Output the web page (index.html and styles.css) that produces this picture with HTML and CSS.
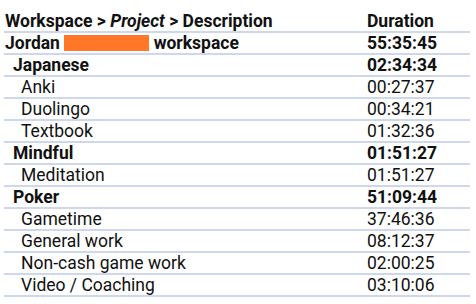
FILE: index.html
```html
<!DOCTYPE html>
<html>
<head>
<meta charset="utf-8">
<link rel="stylesheet" href="styles.css">
</head>
<body>
<div class="report">
  <div class="row head">
    <div class="name">Workspace &gt; <em>Project</em> &gt; Description</div>
    <div class="dur">Duration</div>
  </div>
  <div class="row bold">
    <div class="name">Jordan <span class="redact"></span> workspace</div>
    <div class="dur">55:35:45</div>
  </div>
  <div class="row bold l1">
    <div class="name">Japanese</div>
    <div class="dur">02:34:34</div>
  </div>
  <div class="row l2">
    <div class="name">Anki</div>
    <div class="dur">00:27:37</div>
  </div>
  <div class="row l2">
    <div class="name">Duolingo</div>
    <div class="dur">00:34:21</div>
  </div>
  <div class="row l2">
    <div class="name">Textbook</div>
    <div class="dur">01:32:36</div>
  </div>
  <div class="row bold l1">
    <div class="name">Mindful</div>
    <div class="dur">01:51:27</div>
  </div>
  <div class="row l2">
    <div class="name">Meditation</div>
    <div class="dur">01:51:27</div>
  </div>
  <div class="row bold l1">
    <div class="name">Poker</div>
    <div class="dur">51:09:44</div>
  </div>
  <div class="row l2">
    <div class="name">Gametime</div>
    <div class="dur">37:46:36</div>
  </div>
  <div class="row l2">
    <div class="name">General work</div>
    <div class="dur">08:12:37</div>
  </div>
  <div class="row l2">
    <div class="name">Non-cash game work</div>
    <div class="dur">02:00:25</div>
  </div>
  <div class="row l2">
    <div class="name">Video / Coaching</div>
    <div class="dur">03:10:06</div>
  </div>
</div>
</body>
</html>
```
FILE: styles.css
```css
html, body {
  margin: 0;
  background: #ffffff;
}
body {
  padding: 11px 6px 0 4px;
  font-family: Roboto, "Liberation Sans", sans-serif;
  font-size: 17.5px;
  color: #111111;
}
.report {
  display: flex;
  flex-direction: column;
}
.row {
  display: flex;
  height: 20px;
  line-height: 20px;
  border-bottom: 2px solid #cdd8ee;
  white-space: nowrap;
}
.name {
  flex: 1;
  padding-left: 1px;
}
.dur {
  width: 103px;
  padding-left: 0;
}
.head {
  font-weight: bold;
}
.head em {
  font-style: italic;
}
.bold {
  font-weight: bold;
}
.l1 .name {
  padding-left: 9px;
}
.l2 .name {
  padding-left: 17px;
}
.redact {
  display: inline-block;
  width: 85px;
  height: 16px;
  background: #ff7727;
  vertical-align: -2px;
}
```
